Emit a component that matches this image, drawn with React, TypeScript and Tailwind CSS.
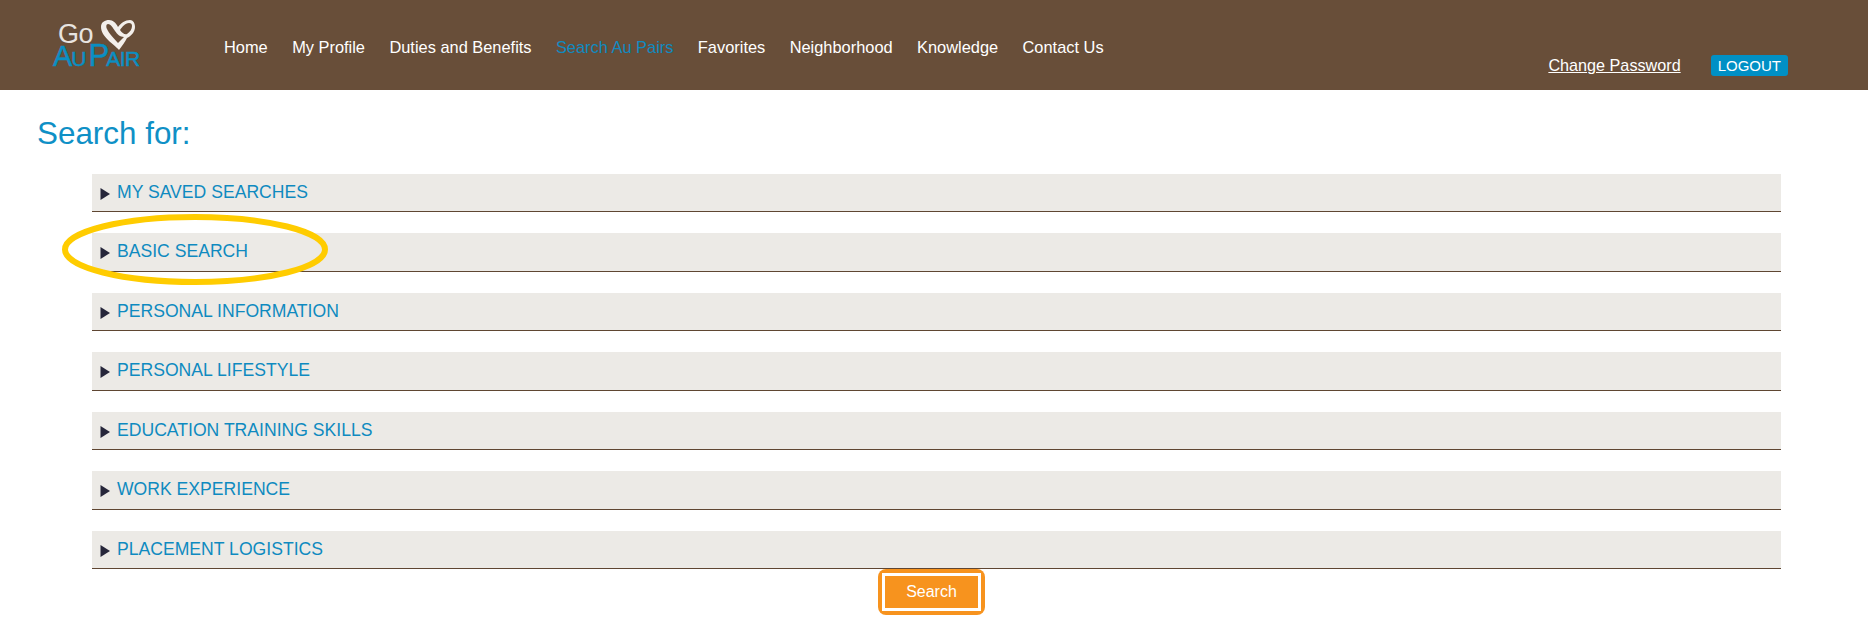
const font = { fontFamily: '"Liberation Sans", Arial, sans-serif' };

const nav = ["Home", "My Profile", "Duties and Benefits", "Search Au Pairs", "Favorites", "Neighborhood", "Knowledge", "Contact Us"];
const rows = ["MY SAVED SEARCHES", "BASIC SEARCH", "PERSONAL INFORMATION", "PERSONAL LIFESTYLE", "EDUCATION TRAINING SKILLS", "WORK EXPERIENCE", "PLACEMENT LOGISTICS"];

function Logo() {
  return (
    <div className="relative w-[100px] h-[60px] ml-[47px] mt-[17px] shrink-0">
      <span className="absolute left-[11px] top-[6px] text-[27px] leading-[22px] tracking-[-0.5px] text-[#e8e4e0]">Go</span>
      <svg className="absolute left-[53px] top-[2px]" width="36" height="32" viewBox="0 0 36 32">
        <path
          fillRule="evenodd"
          fill="#f3efeb"
          d="M19 31C14 25 1 18 1 8C1 3 5 1 9 1C13 1 16 4 18 8C21 4 25 1 30 1C33 1 35 4 35 8C35 13 31 17 27 19C25 23 22 27 19 31ZM8 5C6 5 6 8 7 10C9 15 14 19 18 24C20 22 22 20 24 18C20 18 17 15 15 12C13 9 11 5 8 5ZM29 4C25 4 22 8 20 11C22 14 25 16 27 15C30 13 32 10 32 7C32 5 31 4 29 4Z"
        />
      </svg>
      <span className="absolute left-[6px] top-[28px] flex items-baseline leading-[22px] text-[#0a8fc3] whitespace-nowrap [-webkit-text-stroke:0.5px_#0a8fc3]">
        <span className="text-[29px] tracking-[-1px]">A</span>
        <span className="text-[21px] tracking-[-1px]">U</span>
        <span className="text-[31px] tracking-[-3px] ml-[3px]">P</span>
        <span className="text-[21px] tracking-[-0.5px]">AIR</span>
      </span>
    </div>
  );
}

export default function App() {
  return (
    <div className="relative min-h-[624px] bg-white" style={font}>
      <header className="relative flex h-[90px] bg-[#684e39]">
        <Logo />
        <nav className="flex gap-[24.4px] ml-[77px] pt-[38px] text-[16.4px] leading-[18px] text-white">
          {nav.map((n) => (
            <a key={n} className={n === "Search Au Pairs" ? "text-[#0f8ac0]" : ""}>{n}</a>
          ))}
        </nav>
        <div className="ml-auto flex items-start gap-[30px] pt-[55px] pr-[80px] text-white">
          <a className="underline text-[16.2px] leading-[20px]">Change Password</a>
          <span className="rounded-[3px] bg-[#0090c5] px-[7px] h-[21px] text-[15px] leading-[21px]">LOGOUT</span>
        </div>
      </header>

      <main className="relative">
        <h1 className="pl-[37px] pt-[26px] text-[31.4px] leading-[36px] text-[#0f90c6]">Search for:</h1>
        <div className="ml-[92px] mr-[87px] mt-[21.9px] flex flex-col gap-[21px]">
          {rows.map((r) => (
            <div key={r} className="flex h-[38.5px] items-start border-b border-[#5f4632] bg-[#eceae6] pl-[8px]">
              <svg className="mt-[14px] shrink-0" width="11" height="12" viewBox="0 0 11 12">
                <path d="M0.5 0L10 6L0.5 12Z" fill="#26263a" />
              </svg>
              <span className="ml-[6px] mt-[8px] text-[17.6px] leading-[20px] text-[#0f8ac0]">{r}</span>
            </div>
          ))}
        </div>
        <div className="flex justify-center ml-[-5px]">
          <button className="h-[46px] w-[107px] rounded-[8px] bg-[#f7931e] p-[4px]">
            <span className="flex h-full w-full items-center justify-center border-[3px] border-white text-[16px] text-white">Search</span>
          </button>
        </div>
      </main>

      <svg className="absolute left-[60px] top-[212px]" width="272" height="76" viewBox="0 0 272 76" fill="none">
        <ellipse cx="135" cy="37.5" rx="130" ry="32.5" stroke="#ffcc00" strokeWidth="6" />
      </svg>
    </div>
  );
}
